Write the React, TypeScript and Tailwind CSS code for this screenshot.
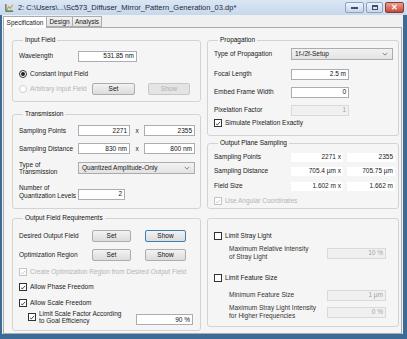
import React from "react"

const Check = ({ on = false, disabled = false }: { on?: boolean; disabled?: boolean }) => (
	<span
		className={`flex h-[8px] w-[8px] shrink-0 items-center justify-center border bg-white ${
			disabled ? "border-[#c4c4c4]" : "border-[#333]"
		}`}
	>
		{on && (
			<svg viewBox="0 0 8 8" className="h-[7px] w-[7px]">
				<path d="M1.2 4.2 L3.1 6 L6.8 1.8" fill="none" stroke={disabled ? "#c4c4c4" : "#222"} strokeWidth="1.1" />
			</svg>
		)}
	</span>
)

const Radio = ({ on = false, disabled = false }: { on?: boolean; disabled?: boolean }) => (
	<span
		className={`flex h-[8px] w-[8px] shrink-0 items-center justify-center rounded-full border bg-white ${
			disabled ? "border-[#d0d0d0]" : "border-[#333]"
		}`}
	>
		{on && <span className="h-[4px] w-[4px] rounded-full bg-[#222]" />}
	</span>
)

const Input = ({ value, w, disabled = false }: { value: string; w: string; disabled?: boolean }) => (
	<div
		className={`flex h-[11px] items-center justify-end border pr-[2px] ${w} ${
			disabled ? "border-[#d9d9d9] bg-[#f0f0f0] text-[#a3a3a3]" : "border-[#abadb3] bg-white text-[#111]"
		}`}
	>
		{value}
	</div>
)

const Btn = ({ label, w, disabled = false, focus = false }: { label: string; w: string; disabled?: boolean; focus?: boolean }) => (
	<div
		className={`flex h-[12px] items-center justify-center rounded-[2px] border ${w} ${
			disabled
				? "border-[#c8c8c8] bg-[#e4e4e4] text-[#b0b0b0]"
				: focus
					? "border-[#3c7fb1] bg-gradient-to-b from-[#f2f2f2] to-[#dcdcdc] text-[#111]"
					: "border-[#acacac] bg-gradient-to-b from-[#f2f2f2] to-[#dcdcdc] text-[#111]"
		}`}
	>
		{label}
	</div>
)

const Select = ({ value, w }: { value: string; w: string }) => (
	<div className={`flex h-[12px] items-center justify-between border border-[#acacac] bg-gradient-to-b from-[#f2f2f2] to-[#e3e3e3] pl-[3px] pr-[4px] ${w}`}>
		<span>{value}</span>
		<svg viewBox="0 0 8 5" className="h-[4px] w-[6px]">
			<path d="M1 1 L4 4 L7 1" fill="none" stroke="#666" strokeWidth="1" />
		</svg>
	</div>
)

const Group = ({ title, className = "", children }: { title?: string; className?: string; children: React.ReactNode }) => (
	<fieldset className={`rounded-[3px] border border-[#d3d3d3] ${className}`}>
		{title && <legend className="ml-[4px] px-[2px] leading-[8px] text-[#111]">{title}</legend>}
		{children}
	</fieldset>
)

const Readout = ({ value, w }: { value: string; w: string }) => (
	<div className={`flex h-[9px] items-center justify-end bg-white pr-[2px] ${w}`}>{value}</div>
)

export default function App() {
	return (
		<div className="flex h-[339px] w-[407px] flex-col overflow-hidden bg-[#cbdaee] font-['Liberation_Sans',Arial,sans-serif] text-[6.5px] text-[#1a1a1a]">
			{/* title bar */}
			<div className="flex h-[15px] shrink-0 items-center bg-gradient-to-b from-[#dbe6f4] to-[#c7d7ec] pl-[5px] pr-[3px]">
				<svg viewBox="0 0 10 10" className="h-[9px] w-[9px]">
					<path d="M1 1 V9 H9" fill="none" stroke="#2f6f3a" strokeWidth="1.2" />
					<path d="M2 8 L4 4 L6 6 L8.5 2" fill="none" stroke="#d0a020" strokeWidth="1.2" />
				</svg>
				<span className="ml-[4px] text-[7.5px] text-[#1d2a3a]">2: C:\Users\...\Sc573_Diffuser_Mirror_Pattern_Generation_03.dp*</span>
				<div className="ml-auto flex items-start gap-[2px] self-start pt-[2px]">
					<div className="flex h-[11px] w-[19px] items-center justify-center rounded-[2px] border border-[#8aa3c4] bg-gradient-to-b from-[#eef3fa] to-[#c8d6ea]">
						<span className="h-[2px] w-[7px] bg-[#3a5270]" />
					</div>
					<div className="flex h-[11px] w-[17px] items-center justify-center rounded-[2px] border border-[#8aa3c4] bg-gradient-to-b from-[#eef3fa] to-[#c8d6ea]">
						<span className="h-[5px] w-[6px] border border-t-2 border-[#3a5270]" />
					</div>
					<div className="flex h-[11px] w-[19px] items-center justify-center rounded-[2px] border border-[#8d3a2f] bg-gradient-to-b from-[#e8a08f] to-[#c4453a] text-[8px] font-bold leading-none text-white">
						✕
					</div>
				</div>
			</div>

			{/* client */}
			<div className="flex flex-1 flex-col border-b-[5px] border-l-[2px] border-r-[4px] border-[#3d6b98] bg-[#f0f0f0] pl-[1px] pr-[1px]">
				{/* tabs */}
				<div className="flex h-[12px] shrink-0 items-end">
					<div className="relative z-10 -mb-px flex h-[12px] w-[44px] items-center justify-center border border-b-0 border-[#acacac] bg-white">
						Specification
					</div>
					<div className="flex h-[11px] w-[26px] items-center justify-center border border-l-0 border-[#acacac] bg-gradient-to-b from-[#f2f2f2] to-[#e3e3e3]">
						Design
					</div>
					<div className="flex h-[11px] w-[29px] items-center justify-center border border-l-0 border-[#acacac] bg-gradient-to-b from-[#f2f2f2] to-[#e3e3e3]">
						Analysis
					</div>
				</div>

				{/* page */}
				<div className="flex flex-1 gap-[6px] border border-[#acacac] bg-[#f5f5f5] pl-[8px] pr-[2px] pt-[8px]">
					{/* left column */}
					<div className="flex w-[190px] flex-col">
						<Group title="Input Field" className="pb-[6px] pl-[6px]">
							<div className="mt-[6px] flex h-[12px] items-center">
								<span className="w-[59px]">Wavelength</span>
								<Input value="531.85 nm" w="w-[59px]" />
							</div>
							<div className="mt-[6px] flex h-[12px] items-center gap-[3px]">
								<Radio on />
								<span>Constant Input Field</span>
							</div>
							<div className="mt-[2px] flex h-[13px] items-center">
								<div className="flex w-[73px] items-center gap-[3px] text-[#b4b4b4]">
									<Radio disabled />
									<span>Arbitrary Input Field</span>
								</div>
								<Btn label="Set" w="w-[43px]" />
								<Btn label="Show" w="w-[42px] ml-[13px]" disabled />
							</div>
						</Group>

						<Group title="Transmission" className="mt-[8px] pb-[8px] pl-[6px]">
							<div className="mt-[7px] flex h-[11px] items-center">
								<span className="w-[59px]">Sampling Points</span>
								<Input value="2271" w="w-[52px]" />
								<span className="w-[14px] text-center">x</span>
								<Input value="2355" w="w-[51px]" />
							</div>
							<div className="mt-[7px] flex h-[11px] items-center">
								<span className="w-[59px]">Sampling Distance</span>
								<Input value="830 nm" w="w-[52px]" />
								<span className="w-[14px] text-center">x</span>
								<Input value="800 nm" w="w-[51px]" />
							</div>
							<div className="mt-[7px] flex h-[14px] items-center">
								<span className="w-[59px] leading-[7px]">
									Type of
									<br />
									Transmission
								</span>
								<Select value="Quantized Amplitude-Only" w="w-[117px]" />
							</div>
							<div className="mt-[9px] flex h-[16px] items-center">
								<span className="w-[59px] leading-[8px]">
									Number of
									<br />
									Quantization Levels
								</span>
								<div className="mt-[4px]">
									<Input value="2" w="w-[47px]" />
								</div>
							</div>
						</Group>

						<Group title="Output Field Requirements" className="mt-[5px] pb-[5px] pl-[6px]">
							<div className="mt-[8px] flex h-[12px] items-center">
								<span className="w-[73px]">Desired Output Field</span>
								<Btn label="Set" w="w-[39px]" />
								<Btn label="Show" w="w-[41px] ml-[14px]" focus />
							</div>
							<div className="mt-[7px] flex h-[12px] items-center">
								<span className="w-[73px]">Optimization Region</span>
								<Btn label="Set" w="w-[39px]" />
								<Btn label="Show" w="w-[41px] ml-[14px]" />
							</div>
							<div className="mt-[5px] flex h-[12px] items-center gap-[3px] text-[#b4b4b4]">
								<Check on disabled />
								<span>Create Optimization Region from Desired Output Field</span>
							</div>
							<div className="mt-[3px] flex h-[12px] items-center gap-[3px]">
								<Check on />
								<span>Allow Phase Freedom</span>
							</div>
							<div className="mt-[4px] flex h-[12px] items-center gap-[3px]">
								<Check on />
								<span>Allow Scale Freedom</span>
							</div>
							<div className="flex h-[16px] items-center pl-[9px]">
								<div className="flex w-[108px] items-center gap-[3px]">
									<Check on />
									<span className="leading-[7px]">
										Limit Scale Factor According
										<br />
										to Goal Efficiency
									</span>
								</div>
								<div className="mt-[5px]">
									<Input value="90 %" w="w-[57px]" />
								</div>
							</div>
						</Group>
					</div>

					{/* right column */}
					<div className="flex w-[193px] flex-col">
						<Group title="Propagation" className="pb-[6px] pl-[6px]">
							<div className="mt-[4px] flex h-[12px] items-center">
								<span className="w-[77px]">Type of Propagation</span>
								<Select value="1f-/2f-Setup" w="w-[102px]" />
							</div>
							<div className="mt-[8px] flex h-[12px] items-center">
								<span className="w-[77px]">Focal Length</span>
								<Input value="2.5 m" w="w-[58px]" />
							</div>
							<div className="mt-[6px] flex h-[12px] items-center">
								<span className="w-[77px]">Embed Frame Width</span>
								<Input value="0" w="w-[58px]" />
							</div>
							<div className="mt-[6px] flex h-[12px] items-center">
								<span className="w-[77px]">Pixelation Factor</span>
								<Input value="1" w="w-[58px]" disabled />
							</div>
							<div className="mt-[1px] flex h-[12px] items-center gap-[3px]">
								<Check on />
								<span>Simulate Pixelation Exactly</span>
							</div>
						</Group>

						<Group title="Output Plane Sampling" className="mt-[3px] pb-[1px] pl-[6px]">
							<div className="mt-[4px] flex h-[12px] items-center">
								<span className="w-[77px]">Sampling Points</span>
								<Readout value="2271 x" w="w-[52px]" />
								<Readout value="2355" w="w-[48px] ml-[4px]" />
							</div>
							<div className="mt-[2px] flex h-[12px] items-center">
								<span className="w-[77px]">Sampling Distance</span>
								<Readout value="705.4 µm x" w="w-[52px]" />
								<Readout value="705.75 µm" w="w-[48px] ml-[4px]" />
							</div>
							<div className="mt-[3px] flex h-[12px] items-center">
								<span className="w-[77px]">Field Size</span>
								<Readout value="1.602 m x" w="w-[52px]" />
								<Readout value="1.662 m" w="w-[48px] ml-[4px]" />
							</div>
							<div className="mt-[3px] flex h-[12px] items-center gap-[3px] text-[#b4b4b4]">
								<Check on disabled />
								<span>Use Angular Coordinates</span>
							</div>
						</Group>

						<Group className="mt-[9px] mb-[6px] flex-1 pl-[6px]">
							<div className="mt-[11px] flex h-[12px] items-center gap-[3px]">
								<Check />
								<span>Limit Stray Light</span>
							</div>
							<div className="mt-[3px] flex h-[16px] items-center pl-[15px]">
								<span className="w-[98px] leading-[8px] text-[#333]">
									Maximum Relative Intensity
									<br />
									of Stray Light
								</span>
								<Input value="10 %" w="w-[59px]" disabled />
							</div>
							<div className="mt-[11px] flex h-[12px] items-center gap-[3px]">
								<Check />
								<span>Limit Feature Size</span>
							</div>
							<div className="mt-[5px] flex h-[12px] items-center pl-[15px]">
								<span className="w-[98px] text-[#333]">Minimum Feature Size</span>
								<Input value="1 µm" w="w-[59px]" disabled />
							</div>
							<div className="mt-[3px] flex h-[16px] items-center pl-[15px]">
								<span className="w-[98px] leading-[8px] text-[#333]">
									Maximum Stray Light Intensity
									<br />
									for Higher Frequencies
								</span>
								<Input value="0 %" w="w-[59px]" disabled />
							</div>
						</Group>
					</div>
				</div>
			</div>
		</div>
	)
}
